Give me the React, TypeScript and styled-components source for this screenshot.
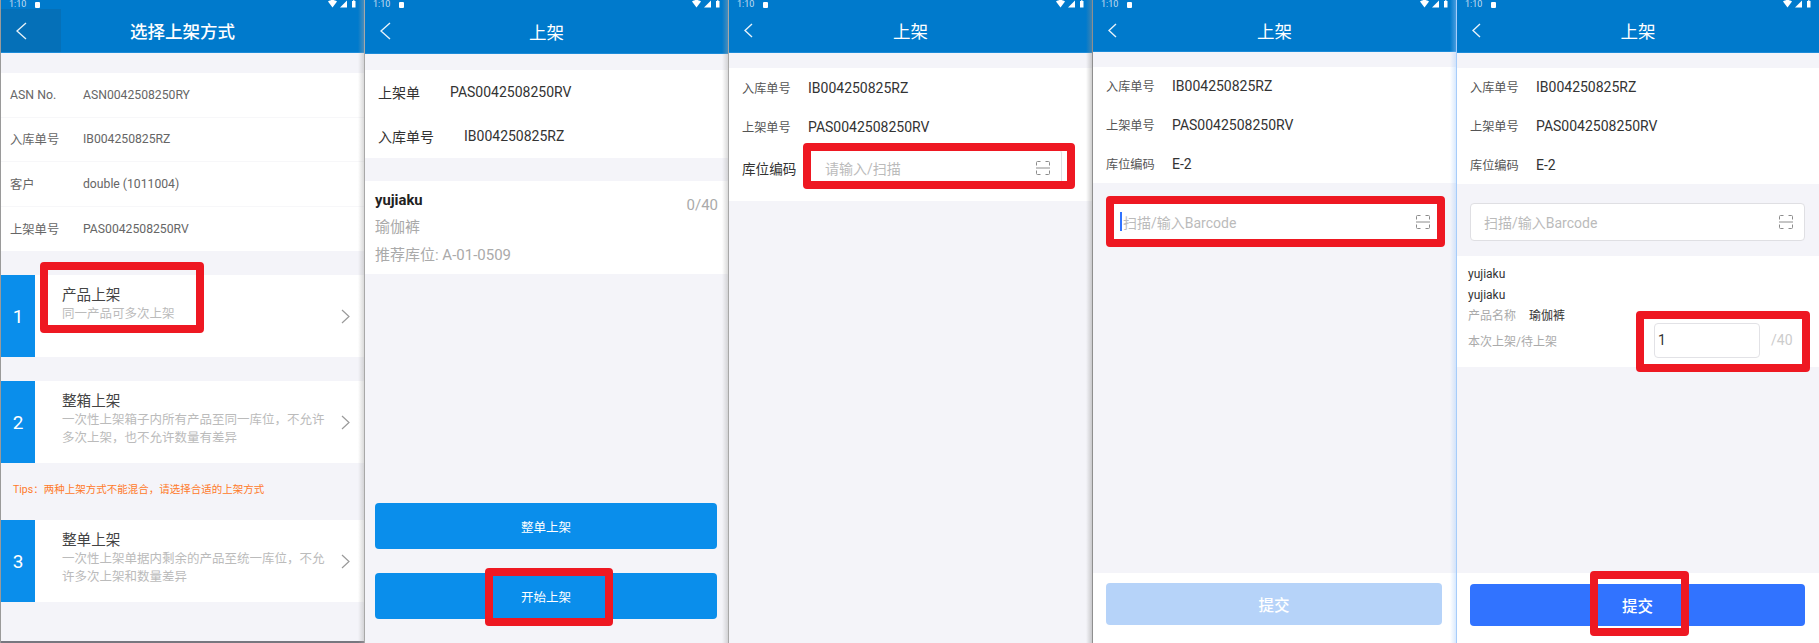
import React from 'react'
import styled, { createGlobalStyle } from 'styled-components'

const FONT = `Roboto, "Noto Sans CJK SC", sans-serif`

const GlobalStyle = createGlobalStyle`
    html, body {
        margin: 0;
        padding: 0;
        background: #fff;
    }
    body {
        font-family: ${FONT};
        -webkit-font-smoothing: antialiased;
    }
    * {
        box-sizing: border-box;
    }
`

const BackIcon = ({ w, h }: { w: number; h: number }) => (
    <svg width={w} height={h} viewBox={`0 0 ${w} ${h}`} fill="none">
        <path d={`M${w - 1} 1L1 ${h / 2}L${w - 1} ${h - 1}`} stroke="rgba(255,255,255,.9)" strokeWidth="1.4" />
    </svg>
)

const ChevronIcon = () => (
    <svg width="9" height="15" viewBox="0 0 9 15" fill="none">
        <path d="M1 1L8 7.5L1 14" stroke="#9a9a9a" strokeWidth="1.2" />
    </svg>
)

const ScanIcon = () => (
    <svg width="14" height="14" viewBox="0 0 14 14" fill="none" stroke="#8c8c8c" strokeWidth="1">
        <path d="M.5 4.5V1.5a1 1 0 0 1 1-1h3M9.5.5h3a1 1 0 0 1 1 1v3M.5 9.5v3a1 1 0 0 0 1 1h3M9.5 13.500h3a1 1 0 0 0 1-1v-3" />
        <path d="M0 7h14" />
    </svg>
)

const StatusIcons = () => (
    <svg width="28" height="8" viewBox="0 0 28 8" fill="#fff">
        <path d="M0 1.500C2.500-.5 6.500-.5 9 1.500L4.500 7.500z" />
        <path d="M12 7.500L19 .5V7.500z" />
        <path d="M24 1h1V.2h1.500V1h1v6.500H24z" />
    </svg>
)

type PhoneProps = {
    title: string
    wideBack?: boolean
    backW: number
    backH: number
    headerH: number
    edge?: string
    children: React.ReactNode
}

const Phone = ({ title, wideBack, backW, backH, headerH, edge, children }: PhoneProps) => (
    <Panel $edge={edge}>
        <Header $h={headerH}>
            <StatusBar>
                <StatusLeft>
                    <Clock>1:10</Clock>
                    <NoticeDot />
                </StatusLeft>
                <StatusIcons />
            </StatusBar>
            <TitleBar>
                <BackButton $wide={wideBack}>
                    <BackIcon w={backW} h={backH} />
                </BackButton>
                <Title $bold={wideBack}>{title}</Title>
            </TitleBar>
        </Header>
        {children}
    </Panel>
)

const methods = [
    { no: 1, name: '产品上架', desc: '同一产品可多次上架' },
    { no: 2, name: '整箱上架', desc: '一次性上架箱子内所有产品至同一库位，不允许多次上架，也不允许数量有差异' },
    { no: 3, name: '整单上架', desc: '一次性上架单据内剩余的产品至统一库位，不允许多次上架和数量差异' },
]

const MethodItem = ({ no, name, desc }: { no: number; name: string; desc: string }) => (
    <MethodCard>
        <MethodNo>{no}</MethodNo>
        <MethodBody>
            <MethodName>{name}</MethodName>
            <MethodDesc>{desc}</MethodDesc>
        </MethodBody>
        <ChevronIcon />
    </MethodCard>
)

const SummaryRows = () => (
    <>
        <InfoRow $h={38.67}>
            <RowLabel>入库单号</RowLabel>
            <RowValue>IB004250825RZ</RowValue>
        </InfoRow>
        <InfoRow $h={38.67}>
            <RowLabel>上架单号</RowLabel>
            <RowValue>PAS0042508250RV</RowValue>
        </InfoRow>
        <InfoRow $h={38.67}>
            <RowLabel>库位编码</RowLabel>
            <RowValue>E-2</RowValue>
        </InfoRow>
    </>
)

const App = () => {
    return (
        <>
            <GlobalStyle />
            <Screens>
                <Phone title="选择上架方式" wideBack backW={11} backH={18} headerH={53} edge="#9a9a9a">
                    <Body>
                        <WhiteBlock $top={20}>
                            <DetailRow>
                                <DetailLabel>ASN No.</DetailLabel>
                                <DetailValue>ASN0042508250RY</DetailValue>
                            </DetailRow>
                            <DetailRow>
                                <DetailLabel>入库单号</DetailLabel>
                                <DetailValue>IB004250825RZ</DetailValue>
                            </DetailRow>
                            <DetailRow>
                                <DetailLabel>客户</DetailLabel>
                                <DetailValue>double (1011004)</DetailValue>
                            </DetailRow>
                            <DetailRow>
                                <DetailLabel>上架单号</DetailLabel>
                                <DetailValue>PAS0042508250RV</DetailValue>
                            </DetailRow>
                        </WhiteBlock>
                        <MethodGap />
                        <MethodItem {...methods[0]} />
                        <MethodGap />
                        <MethodItem {...methods[1]} />
                        <Tips>Tips：两种上架方式不能混合，请选择合适的上架方式</Tips>
                        <MethodItem {...methods[2]} />
                    </Body>
                    <BottomRule />
                    <RedBox $x={40} $y={262} $w={164} $h={71} />
                </Phone>

                <Phone title="上架" backW={11} backH={18} headerH={54}>
                    <Body>
                        <WhiteBlock $top={16}>
                            <PlainRow>
                                <span>上架单</span>
                                <span>PAS0042508250RV</span>
                            </PlainRow>
                            <PlainRow>
                                <span>入库单号</span>
                                <span>IB004250825RZ</span>
                            </PlainRow>
                        </WhiteBlock>
                        <ProductCard>
                            <ProductName>yujiaku</ProductName>
                            <ProductMeta>瑜伽裤</ProductMeta>
                            <ProductMeta>推荐库位: A-01-0509</ProductMeta>
                            <ProductCount>0/40</ProductCount>
                        </ProductCard>
                        <ButtonStack>
                            <ActionButton>整单上架</ActionButton>
                            <ActionButton>开始上架</ActionButton>
                        </ButtonStack>
                    </Body>
                    <RedBox $x={121} $y={568} $w={128} $h={58} />
                </Phone>

                <Phone title="上架" backW={9} backH={15} headerH={53}>
                    <Body>
                        <WhiteBlock $top={15} $bottom={11}>
                            <InfoRow $h={39}>
                                <RowLabel>入库单号</RowLabel>
                                <RowValue>IB004250825RZ</RowValue>
                            </InfoRow>
                            <InfoRow $h={39}>
                                <RowLabel>上架单号</RowLabel>
                                <RowValue>PAS0042508250RV</RowValue>
                            </InfoRow>
                            <LocationRow>
                                <LocationLabel>库位编码</LocationLabel>
                                <ScanField $pad={21}>
                                    <Placeholder>请输入/扫描</Placeholder>
                                    <ScanIcon />
                                </ScanField>
                            </LocationRow>
                        </WhiteBlock>
                    </Body>
                    <RedBox $x={75} $y={143} $w={272} $h={46} />
                </Phone>

                <Phone title="上架" backW={9} backH={15} headerH={52} edge="#8f8f8f">
                    <Body>
                        <WhiteBlock $top={15}>
                            <SummaryRows />
                        </WhiteBlock>
                        <BarcodeArea>
                            <ScanField $pad={13}>
                                <Caret />
                                <Placeholder>扫描/输入Barcode</Placeholder>
                                <ScanIcon />
                            </ScanField>
                        </BarcodeArea>
                        <Footer $top={10}>
                            <SubmitButton $active={false}>提交</SubmitButton>
                        </Footer>
                    </Body>
                    <RedBox $x={14} $y={196} $w={339} $h={51} />
                </Phone>

                <Phone title="上架" backW={9} backH={15} headerH={53} edge="#a6ccfa">
                    <Body>
                        <WhiteBlock $top={15}>
                            <SummaryRows />
                        </WhiteBlock>
                        <BarcodeBlock>
                            <ScanField $pad={13}>
                                <Placeholder>扫描/输入Barcode</Placeholder>
                                <ScanIcon />
                            </ScanField>
                        </BarcodeBlock>
                        <ScanResult>
                            <ResultLine>yujiaku</ResultLine>
                            <ResultLine>yujiaku</ResultLine>
                            <ResultName>
                                <ResultLabel>产品名称</ResultLabel>
                                瑜伽裤
                            </ResultName>
                            <QtyRow>
                                <ResultLabel>本次上架/待上架</ResultLabel>
                                <QtyInput>1</QtyInput>
                                <QtyTotal>/40</QtyTotal>
                            </QtyRow>
                        </ScanResult>
                        <Spacer />
                        <Footer $top={11}>
                            <SubmitButton $active>提交</SubmitButton>
                        </Footer>
                    </Body>
                    <RedBox $x={180} $y={311} $w={174} $h={61} />
                    <RedBox $x={134} $y={571} $w={99} $h={65} />
                </Phone>
            </Screens>
        </>
    )
}

export default App

const Screens = styled.div`
    display: grid;
    grid-template-columns: 364px 364px 364px 364px 363px;
    width: 1819px;
    height: 643px;
    overflow: hidden;
`

const Panel = styled.section<{ $edge?: string }>`
    position: relative;
    display: flex;
    flex-direction: column;
    height: 643px;
    background: #f4f4f9;
    border-left: 1px solid ${({ $edge }) => $edge || '#a8a8a8'};

    &::after {
        content: '';
        position: absolute;
        top: 0;
        bottom: 0;
        left: -7px;
        width: 7px;
        background: linear-gradient(90deg, rgba(120, 120, 120, 0), ${({ $edge }) => $edge || '#a8a8a8'});
        opacity: 0.5;
        z-index: 2;
    }
`

const Header = styled.header<{ $h: number }>`
    display: flex;
    flex-direction: column;
    flex: none;
    height: ${({ $h }) => $h}px;
    background: #007acc;
    border-bottom: 1px solid #1c8bd8;
    color: #fff;
`

const StatusBar = styled.div`
    display: flex;
    align-items: flex-start;
    justify-content: space-between;
    flex: none;
    height: 9px;
    padding: 0 8px;
`

const StatusLeft = styled.div`
    display: flex;
    align-items: center;
    gap: 9px;
`

const Clock = styled.span`
    display: block;
    font-size: 9px;
    line-height: 9px;
    color: rgba(255, 255, 255, 0.75);
`

const NoticeDot = styled.span`
    display: block;
    width: 5px;
    height: 6px;
    background: #fff;
    border-radius: 1px;
`

const TitleBar = styled.div`
    position: relative;
    display: flex;
    align-items: center;
    justify-content: center;
    flex: 1;
`

const BackButton = styled.div<{ $wide?: boolean }>`
    position: absolute;
    left: 0;
    top: 0;
    bottom: 0;
    display: flex;
    align-items: center;
    width: 60px;
    padding-left: 15px;
    background: ${({ $wide }) => ($wide ? '#0570b8' : 'transparent')};
`

const Title = styled.h1<{ $bold?: boolean }>`
    margin: 0;
    font-size: 17.5px;
    font-weight: ${({ $bold }) => ($bold ? 500 : 400)};
    color: #fff;
`

const Body = styled.main`
    display: flex;
    flex-direction: column;
    flex: 1;
    min-height: 0;
`

const WhiteBlock = styled.div<{ $top: number; $bottom?: number }>`
    flex: none;
    margin-top: ${({ $top }) => $top}px;
    padding-bottom: ${({ $bottom }) => $bottom || 0}px;
    background: #fff;
`

const DetailRow = styled.div`
    display: flex;
    align-items: center;
    height: 44.5px;
    padding-left: 9px;
    border-bottom: 1px solid #f7f7f9;

    &:last-child {
        border-bottom: 0;
    }
`

const DetailLabel = styled.span`
    width: 73px;
    font-size: 12.3px;
    color: #666;
`

const DetailValue = styled.span`
    font-size: 12.2px;
    color: #666;
`

const MethodGap = styled.div`
    flex: none;
    height: 24px;
`

const MethodCard = styled.div`
    display: flex;
    align-items: center;
    flex: none;
    height: 82px;
    padding-right: 14px;
    background: #fff;
`

const MethodNo = styled.div`
    display: flex;
    align-items: center;
    justify-content: center;
    flex: none;
    width: 34px;
    height: 100%;
    background: #0a8eeb;
    color: #fff;
    font-size: 19px;
`

const MethodBody = styled.div`
    flex: 1;
    height: 100%;
    padding: 10px 0 0 27px;
`

const MethodName = styled.div`
    font-size: 14.6px;
    line-height: 20px;
    color: #444;
`

const MethodDesc = styled.div`
    width: 265px;
    font-size: 12.5px;
    line-height: 18px;
    color: #bbb;
`

const Tips = styled.div`
    display: flex;
    align-items: center;
    flex: none;
    height: 57px;
    padding: 0 0 7px 12px;
    font-size: 10.5px;
    color: #ff7a2a;
`

const BottomRule = styled.div`
    position: absolute;
    left: 0;
    right: 0;
    bottom: 0;
    height: 2px;
    background: #77777f;
`

const PlainRow = styled.div`
    display: flex;
    align-items: center;
    gap: 30px;
    height: 44px;
    padding-left: 13px;
    font-size: 14px;
    color: #333;
`

const ProductCard = styled.div`
    position: relative;
    flex: none;
    height: 93px;
    margin-top: 23px;
    padding: 9px 10px 0;
    background: #fff;
`

const ProductName = styled.div`
    margin-bottom: 3px;
    font-size: 14.8px;
    font-weight: 700;
    line-height: 20px;
    color: #222;
`

const ProductMeta = styled.div`
    font-size: 15px;
    line-height: 28px;
    color: #aaa;
`

const ProductCount = styled.span`
    position: absolute;
    top: 15px;
    right: 10px;
    font-size: 15px;
    color: #aaa;
`

const ButtonStack = styled.div`
    display: flex;
    flex-direction: column;
    gap: 24px;
    margin-top: auto;
    padding: 0 11px 24px 10px;
`

const ActionButton = styled.button`
    height: 46px;
    border: 0;
    border-radius: 4px;
    background: #0a8eeb;
    color: #fff;
    font-family: ${FONT};
    font-size: 12.5px;
`

const InfoRow = styled.div<{ $h: number }>`
    display: flex;
    align-items: center;
    height: ${({ $h }) => $h}px;
    padding-left: 13px;
`

const RowLabel = styled.span`
    flex: none;
    width: 66px;
    font-size: 12.2px;
    color: #555;
`

const RowValue = styled.span`
    font-size: 14px;
    color: #333;
`

const LocationRow = styled.div`
    display: flex;
    align-items: center;
    gap: 6px;
    height: 44px;
    padding: 0 30px 0 13px;
`

const LocationLabel = styled.span`
    flex: none;
    width: 55px;
    font-size: 13.6px;
    color: #333;
    white-space: nowrap;
`

const ScanField = styled.div<{ $pad: number }>`
    display: flex;
    align-items: center;
    flex: 1;
    height: 38px;
    padding: 0 11px 0 ${({ $pad }) => $pad}px;
    background: #fff;
    border: 1px solid #dfdfe3;
    border-radius: 4px;
`

const Placeholder = styled.span`
    flex: 1;
    font-size: 14px;
    color: #bbb;
`

const Caret = styled.span`
    flex: none;
    width: 2px;
    height: 19px;
    margin-right: 1px;
    background: #3173ff;
`

const BarcodeArea = styled.div`
    display: flex;
    align-items: flex-start;
    flex: 1;
    padding: 20px 14px 0 13px;
`

const BarcodeBlock = styled.div`
    display: flex;
    flex: none;
    height: 72px;
    padding: 19px 14px 0 13px;
`

const ScanResult = styled.div`
    flex: none;
    height: 111px;
    padding: 8px 0 0 11px;
    background: #fff;
`

const ResultLine = styled.div`
    font-size: 12px;
    line-height: 21px;
    color: #333;
`

const ResultName = styled.div`
    font-size: 12px;
    line-height: 20px;
    color: #333;
`

const ResultLabel = styled.span`
    display: inline-block;
    width: 61px;
    font-size: 12px;
    color: #aaa;
    white-space: nowrap;
`

const QtyRow = styled.div`
    display: grid;
    grid-template-columns: 175px 106px auto;
    align-items: center;
    gap: 11px;
    margin-top: -3px;
`

const QtyInput = styled.div`
    display: flex;
    align-items: center;
    height: 35px;
    padding-left: 3px;
    border: 1px solid #e2e2e6;
    border-radius: 4px;
    font-size: 14px;
    color: #333;
`

const QtyTotal = styled.span`
    font-size: 14px;
    color: #ccc;
`

const Spacer = styled.div`
    flex: 1;
`

const Footer = styled.footer<{ $top: number }>`
    display: flex;
    flex: none;
    height: 70px;
    padding: ${({ $top }) => $top}px 14px 0 13px;
    background: #fff;
`

const SubmitButton = styled.button<{ $active: boolean }>`
    flex: 1;
    height: 42px;
    border: 0;
    border-radius: 4px;
    background: ${({ $active }) => ($active ? '#3173ff' : '#b6d3f9')};
    color: #fff;
    font-family: ${FONT};
    font-size: 15.5px;
    font-weight: 500;
`

const RedBox = styled.div<{ $x: number; $y: number; $w: number; $h: number }>`
    position: absolute;
    left: ${({ $x }) => $x - 1}px;
    top: ${({ $y }) => $y}px;
    width: ${({ $w }) => $w}px;
    height: ${({ $h }) => $h}px;
    border: 8px solid #ee1822;
    border-radius: 4px;
    z-index: 3;
`
